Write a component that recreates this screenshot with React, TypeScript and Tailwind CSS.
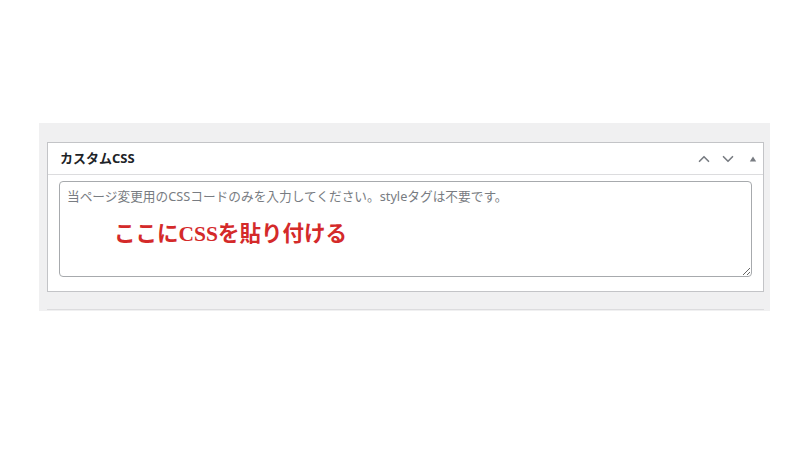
import { ChevronUp, ChevronDown } from "lucide-react";

const jp = { fontFamily: '"Noto Sans", "Noto Sans CJK JP", sans-serif' };

export default function App() {
  return (
    <div className="h-[450px] w-[800px] overflow-hidden bg-white pt-[123px]" style={jp}>
      <div className="ml-[39px] w-[731px] bg-[#f0f0f1] pl-[8px] pr-[6px] pt-[19px]">
        <div className="border border-[#c3c4c7] bg-white">
          <div className="flex h-[32px] items-center border-b border-[#dcdcde] pl-[12px] pr-[6px]">
            <h2 className="text-[13px] font-bold text-[#1d2327]">カスタムCSS</h2>
            <div className="ml-auto flex items-center text-[#787c82]">
              <ChevronUp className="h-[18px] w-[18px]" strokeWidth={2.2} />
              <ChevronDown className="ml-[6px] h-[18px] w-[18px]" strokeWidth={2.2} />
              <svg viewBox="0 0 10 10" className="ml-[12px] h-[8px] w-[8px]">
                <path d="M5 2 L9 8 L1 8 Z" fill="#787c82" />
              </svg>
            </div>
          </div>
          <div className="relative px-[11px] pb-[14px] pt-[6px]">
            <textarea
              className="block h-[96px] w-full resize-y rounded-[4px] border border-[#a7aaad] px-[7px] py-[3px] text-[12.7px] leading-[22px] text-[#2c3338] placeholder:text-[#787c82] focus:outline-none"
              placeholder="当ページ変更用のCSSコードのみを入力してください。styleタグは不要です。"
            />
            <span
              className="pointer-events-none absolute left-[66px] top-[45px] text-[21.5px] font-bold leading-[28px] text-[#d42a2a]"
              style={{ fontFamily: '"Liberation Serif", "Noto Sans CJK JP", serif' }}
            >
              ここにCSSを貼り付ける
            </span>
          </div>
        </div>
        <div className="mt-[17px] h-[2px] border-t border-[#dcdcde]" />
      </div>
    </div>
  );
}
